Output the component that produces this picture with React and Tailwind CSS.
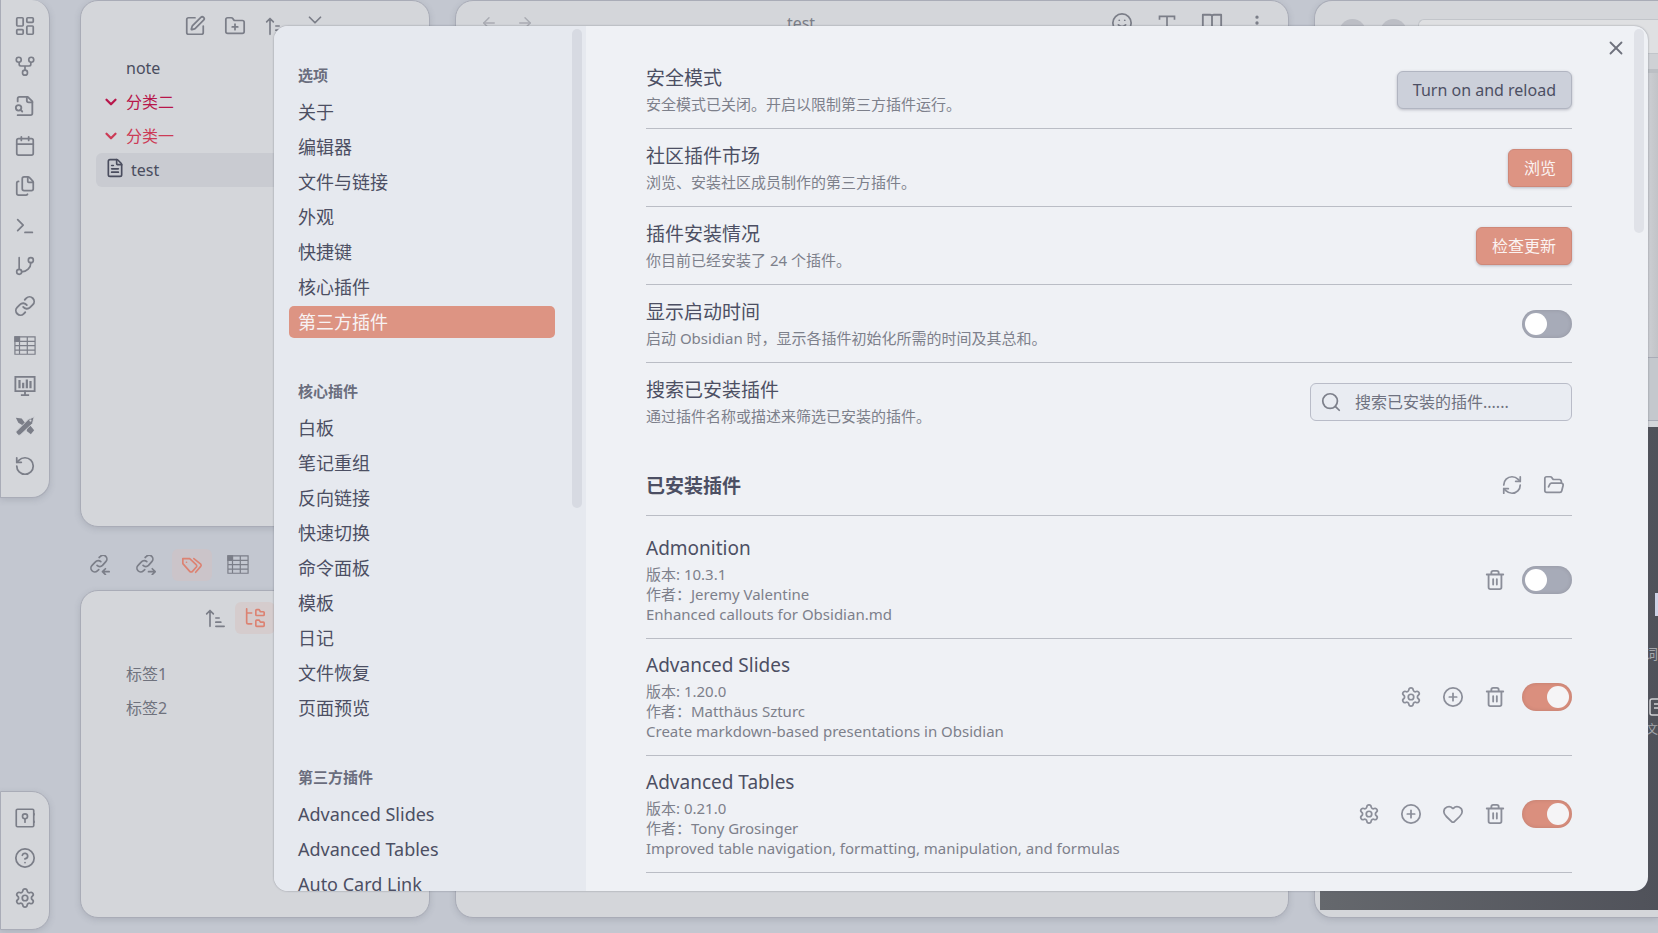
import { ArrowLeft, ArrowRight, Calendar, ChevronDown, CircleHelp, CirclePlus, EllipsisVertical, FileText, Files, FolderOpen, FolderPlus, Heart, LayoutDashboard, RefreshCw, RotateCcw, Search, Settings, Smile, SquarePen, Terminal, X } from 'lucide-react';

const iconProps = { size: 22, strokeWidth: 1.9 };

function Svg({ children, size = 20, ...rest }) {
  return (
    <svg width={size} height={size} viewBox="0 0 24 24" fill="none" stroke="currentColor" strokeWidth="2" strokeLinecap="round" strokeLinejoin="round" aria-hidden="true" {...rest}>
      {children}
    </svg>
  );
}

const FileSearchIcon = () => (
  <Svg size={22}>
    <path d="M4 22h14a2 2 0 0 0 2-2V7l-5-5H6a2 2 0 0 0-2 2v3" />
    <path d="M14 2v4a2 2 0 0 0 2 2h4" />
    <circle cx="5" cy="14" r="3" />
    <path d="m9 18-1.5-1.5" />
  </Svg>
);
const BranchIcon = () => (
  <Svg>
    <path d="M5 2v13" />
    <circle cx="19" cy="5" r="3" />
    <circle cx="5" cy="19" r="3" />
    <path d="M19 8a11 11 0 0 1-11 11" />
  </Svg>
);
const ForkIcon = () => (
  <Svg>
    <circle cx="12" cy="20" r="3" />
    <circle cx="4.500" cy="4.500" r="3" />
    <circle cx="19.500" cy="4.500" r="3" />
    <path d="M5 8v2a2 2 0 0 0 2 2h10a2 2 0 0 0 2-2V8M12 12v5" />
  </Svg>
);
const ChainIcon = () => (
  <Svg size={22}>
    <path d="M10 13a5 5 0 0 0 7.540.540l3-3a5 5 0 0 0-7.070-7.070l-1.720 1.710" />
    <path d="M14 11a5 5 0 0 0-7.540-.540l-3 3a5 5 0 0 0 7.070 7.070l1.710-1.710" />
  </Svg>
);
const TableIcon = () => (
  <Svg size={22} strokeWidth="1.3" strokeLinecap="butt" strokeLinejoin="miter">
    <path d="M1 2h22v19H1zM1 7h22M1 11.500h22M1 16.500h22M6 2v19M14.500 2v19" />
    <path d="M1 2h5v5H1z" fill="currentColor" />
  </Svg>
);
const MonitorIcon = () => (
  <Svg size={22} strokeLinecap="butt" strokeLinejoin="miter">
    <path d="M1.500 2h21v15.500h-21z" />
    <path d="M6 5.500v9M10 8.500v6M14 5v9.500M18 6.500v8" strokeWidth="2.400" />
    <path d="M12 17v5M7.500 22h9" />
  </Svg>
);
const CraftIcon = () => (
  <Svg stroke="none" fill="currentColor">
    <path d="M1 2l7 1 4 5-3 3-5-3zM15 14l3-3 5 6-4 5-5-4z" />
    <path d="M1 19 16 4l7-3-2 8L6 23H4z" stroke="#d4d6da" strokeWidth="1" />
    <circle cx="18.500" cy="5.500" r="1.300" fill="#d4d6da" />
  </Svg>
);
const VaultIcon = () => (
  <Svg>
    <rect x="1.500" y="1.500" width="21" height="21" rx="1.500" />
    <circle cx="12" cy="10" r="3" />
    <path d="M12 13v4M24 7v1M24 16v1" />
  </Svg>
);
const LinkArrowIcon = ({ out }) => (
  <Svg>
    <path d="M8.500 12.500a4.500 4.500 0 0 0 6.500 0l4-4.500a4.500 4.500 0 0 0-6.500-6.300L11 3" />
    <path d="M13 8a4.500 4.500 0 0 0-6.500.3l-4 4.200a4.500 4.500 0 0 0 6.300 6.500l1.700-1.500" />
    {out ? <path d="M15 20h8m-3.500-3.500L23 20l-3.500 3.500" /> : <path d="M23 20h-8m3.500-3.500L15 20l3.500 3.500" />}
  </Svg>
);
const TagsIcon = () => (
  <Svg size={22} strokeWidth="1.800">
    <path d="M2 5v5.500l7.500 8.500a2 2 0 0 0 3 0l4-4.500a2 2 0 0 0 0-3L9.500 5z" />
    <path d="m14 5 7.500 6a2 2 0 0 1 0 2.500L16 20" />
    <path d="M6 9h.01" />
  </Svg>
);
const TreeIcon = () => (
  <Svg>
    <path d="M2 1v16a2 2 0 0 0 2 2h4M2 6h6" />
    <path d="M13 3v5a1 1 0 0 0 1 1h8a1 1 0 0 0 1-1V5.500a1 1 0 0 0-1-1h-3.500L17 2h-3a1 1 0 0 0-1 1zM13 15.500v5.500a1 1 0 0 0 1 1h8a1 1 0 0 0 1-1v-3a1 1 0 0 0-1-1h-3.500L17 14.500h-3a1 1 0 0 0-1 1z" />
  </Svg>
);
const SortIcon = () => (
  <Svg>
    <path d="m2 7 4-4 4 4M6 3v19M13 12h4M13 17h6M13 22h10" />
  </Svg>
);
const TrashIcon = () => (
  <Svg size={22}>
    <path d="M3 6h18M5 6v14a2 2 0 0 0 2 2h10a2 2 0 0 0 2-2V6M8 6V4a2 2 0 0 1 2-2h4a2 2 0 0 1 2 2v2M10 11v6M14 11v6" />
  </Svg>
);
const SerifTIcon = () => (
  <Svg strokeLinecap="butt" strokeLinejoin="miter">
    <path d="M3 8V4h18v4M12 4v16M9 20h6" />
  </Svg>
);
const BookIcon = () => (
  <Svg size={22}>
    <path d="M2 3h8a2 2 0 0 1 2 2 2 2 0 0 1 2-2h8v17h-8a2 2 0 0 0-2 2 2 2 0 0 0-2-2H2zM12 5v17" />
  </Svg>
);

const ribbon = [
  ['仪表盘', <LayoutDashboard {...iconProps} />],
  ['关系图谱', <ForkIcon />],
  ['搜索文件', <FileSearchIcon />],
  ['日历', <Calendar {...iconProps} />],
  ['文件', <Files {...iconProps} />],
  ['终端', <Terminal {...iconProps} />],
  ['分支', <BranchIcon />],
  ['链接', <ChainIcon />],
  ['表格', <TableIcon />],
  ['演示', <MonitorIcon />],
  ['设计', <CraftIcon />],
  ['撤销', <RotateCcw {...iconProps} />],
];
const ribbonBottom = [
  ['仓库', <VaultIcon />],
  ['帮助', <CircleHelp {...iconProps} />],
  ['设置', <Settings {...iconProps} />],
];

const groups = [
  ['选项', ['关于', '编辑器', '文件与链接', '外观', '快捷键', '核心插件', '第三方插件']],
  ['核心插件', ['白板', '笔记重组', '反向链接', '快速切换', '命令面板', '模板', '日记', '文件恢复', '页面预览']],
  ['第三方插件', ['Advanced Slides', 'Advanced Tables', 'Auto Card Link']],
];

const plugins = [
  { name: 'Admonition', version: '10.3.1', author: 'Jeremy Valentine', desc: 'Enhanced callouts for Obsidian.md', on: false, actions: [] },
  { name: 'Advanced Slides', version: '1.20.0', author: 'Matthäus Szturc', desc: 'Create markdown-based presentations in Obsidian', on: true, actions: ['设置', '快捷键'] },
  { name: 'Advanced Tables', version: '0.21.0', author: 'Tony Grosinger', desc: 'Improved table navigation, formatting, manipulation, and formulas', on: true, actions: ['设置', '快捷键', '赞助'] },
];

const actionIcons = {
  设置: <Settings {...iconProps} />,
  快捷键: <CirclePlus {...iconProps} />,
  赞助: <Heart {...iconProps} />,
};

function IconButton({ label, className = 'size-10', children }) {
  return (
    <button type="button" aria-label={label} className={`flex shrink-0 items-center justify-center ${className}`}>
      {children}
    </button>
  );
}

function Toggle({ label, on = false }) {
  return (
    <input
      type="checkbox"
      role="switch"
      aria-label={label}
      defaultChecked={on}
      className="flex h-7 w-[50px] shrink-0 appearance-none items-center rounded-full bg-[#a7abb8] px-[3px] shadow-[inset_0_0_4px_rgba(0,0,0,0.12)] before:size-[22px] before:rounded-full before:bg-white before:content-[''] checked:justify-end checked:bg-[#da8f7e] checked:before:bg-[#f5f4f6]"
    />
  );
}

function Setting({ title, desc, last, children }) {
  return (
    <div className={`flex items-center justify-between border-b ${last ? 'border-transparent' : 'border-[#babdc5]'}`}>
      <div className="pt-[15px] pb-[14px]">
        <h3 className="text-[19px] leading-6">{title}</h3>
        <p className="mt-1 text-[15px] leading-5 text-[#7d808b]">{desc}</p>
      </div>
      {children}
    </div>
  );
}

function Plugin({ name, version, author, desc, on, actions }) {
  return (
    <li className="flex items-center justify-between border-b border-[#babdc5] first:pt-[6px]">
      <div className="py-[14px]">
        <h3 className="text-[19px] leading-6">{name}</h3>
        <div className="mt-1 text-[15px] leading-5 text-[#7d808b]">
          <p>版本: {version}</p>
          <p>作者：{author}</p>
          <p>{desc}</p>
        </div>
      </div>
      <div className="flex items-center gap-[6px] text-[#8b8e99]">
        {actions.map((a) => <IconButton key={a} label={a} className="size-9">{actionIcons[a]}</IconButton>)}
        <IconButton label="卸载" className="mr-[3px] size-9"><TrashIcon /></IconButton>
        <Toggle label={name} on={on} />
      </div>
    </li>
  );
}

const buttonBase = 'h-[38px] rounded-[6px] border px-[15px] text-base shadow-[0_1px_3px_rgba(60,60,80,0.3)]';
const panel = 'border border-[#a9acb7] bg-[#d4d6da] shadow-[0_2px_6px_rgba(80,85,100,0.18)]';

function Workspace() {
  return (
    <div className="flex h-screen text-[#7b7e88]">
      <aside className="flex w-[50px] shrink-0 flex-col justify-between pb-[3px]">
        <nav aria-label="功能区" className={`flex flex-col items-center rounded-r-[18px] border-t-0 pt-[6px] pb-[11px] ${panel}`}>
          {ribbon.map(([label, icon]) => <IconButton key={label} label={label}>{icon}</IconButton>)}
        </nav>
        <nav aria-label="系统" className={`flex flex-col items-center rounded-r-[18px] pt-[6px] pb-[11px] ${panel}`}>
          {ribbonBottom.map(([label, icon]) => <IconButton key={label} label={label}>{icon}</IconButton>)}
        </nav>
      </aside>

      <div className="ml-[30px] flex w-[350px] shrink-0 flex-col pb-[15px]">
        <section className={`h-[527px] rounded-[18px] ${panel}`}>
          <div className="flex h-[50px] items-center pl-[94px]">
            <IconButton label="新建笔记"><SquarePen {...iconProps} /></IconButton>
            <IconButton label="新建文件夹"><FolderPlus {...iconProps} /></IconButton>
            <IconButton label="排序"><SortIcon /></IconButton>
            <IconButton label="展开" className="size-10 pb-3"><ChevronDown {...iconProps} /></IconButton>
          </div>
          <ul className="px-[15px] text-base leading-[34px]">
            <li className="pl-[30px] text-[#4a4d5e]">note</li>
            <li className="flex items-center gap-[6px] pl-[6px] text-[#b8174b]"><ChevronDown size={18} strokeWidth={3} />分类二</li>
            <li className="flex items-center gap-[6px] pl-[6px] text-[#cc3b56]"><ChevronDown size={18} strokeWidth={3} />分类一</li>
            <li className="flex items-center gap-[6px] rounded-[6px] bg-[#c9cbd1] pl-[9px] text-[#4a4d5e]"><FileText size={20} strokeWidth={2} className="mb-1" />test</li>
          </ul>
        </section>
        <div className="flex h-[63px] shrink-0 items-center gap-[6px] pt-3">
          <IconButton label="反向链接" className="h-8 w-10"><LinkArrowIcon /></IconButton>
          <IconButton label="出链" className="h-8 w-10"><LinkArrowIcon out /></IconButton>
          <IconButton label="标签" className="h-8 w-10 rounded-[6px] bg-[#cbc4c9] text-[#dc8272]"><TagsIcon /></IconButton>
          <IconButton label="表格" className="h-8 w-10"><TableIcon /></IconButton>
        </div>
        <section className={`flex-1 rounded-[18px] ${panel}`}>
          <div className="flex h-[54px] items-center pl-[114px]">
            <IconButton label="排序"><SortIcon /></IconButton>
            <IconButton label="嵌套标签" className="h-8 w-10 rounded-[6px] bg-[#d5cccd] text-[#dc8272]"><TreeIcon /></IconButton>
          </div>
          <ul className="pt-[12px] pl-[45px] text-base leading-[34px] text-[#6f727d]">
            <li>标签1</li>
            <li>标签2</li>
          </ul>
        </section>
      </div>

      <section className={`mb-[15px] ml-[25px] w-[834px] shrink rounded-[18px] ${panel}`}>
        <header className="flex h-11 items-center justify-between pr-[11px] pl-[15px]">
          <div className="flex w-[180px] text-[#a9abb2]">
            <IconButton label="后退" className="h-10 w-9"><ArrowLeft {...iconProps} size={18} /></IconButton>
            <IconButton label="前进" className="h-10 w-9"><ArrowRight {...iconProps} size={18} /></IconButton>
          </div>
          <span className="text-base">test</span>
          <div className="flex w-[326px] justify-end gap-[5px]">
            <IconButton label="表情"><Smile {...iconProps} /></IconButton>
            <IconButton label="字体"><SerifTIcon /></IconButton>
            <IconButton label="阅读"><BookIcon /></IconButton>
            <IconButton label="更多"><EllipsisVertical size={20} strokeWidth={2} /></IconButton>
          </div>
        </header>
      </section>

      <section className={`mb-[15px] ml-[25px] flex min-w-0 flex-1 flex-col rounded-l-[18px] border-r-0 ${panel}`}>
        <header className="flex h-[53px] shrink-0 items-end gap-[14px] overflow-hidden pl-6">
          <span className="mb-2 size-[27px] shrink-0 rounded-full bg-[#bcbec5]" />
          <span className="mb-2 size-[27px] shrink-0 rounded-full bg-[#bcbec5]" />
          <span className="-ml-[3px] h-[35px] flex-1 rounded-tl-[6px] border border-r-0 border-[#c2c5ca] bg-[#dfe0e2]" />
        </header>
        <div className="h-[15px] shrink-0 bg-[#cfd1d5]" />
        <div className="h-[288px] shrink-0 border-t-4 border-[#bcbfc4] bg-linear-to-r from-[#d4d6da] from-95% to-[#c2c4c8]" />
        <div className="h-[64px] shrink-0 border-y border-[#a9acb7] bg-[#c4c8cd]" />
        <div className="mt-[6px] mb-[7px] ml-[5px] flex flex-1 flex-col items-end overflow-hidden bg-linear-to-r from-[#65686d] to-[#50525a] pt-[166px] text-[#a4a6ab]">
          <span className="h-[23px] w-[3px] bg-[#cfd2e6]" />
          <span className="mt-7 text-sm leading-5">词</span>
          <svg width="14" height="18" viewBox="0 0 14 18" fill="none" stroke="#d0d1d4" strokeWidth="1.5" className="-mr-1 mt-[34px]" aria-hidden="true">
            <path d="M14 1H4a2 2 0 0 0-2 2v12a2 2 0 0 0 2 2h10M6 6h8M6 10h8" />
          </svg>
          <span className="mt-[6px] text-xs leading-4">文</span>
        </div>
      </section>
    </div>
  );
}

function SettingsDialog() {
  return (
    <div className="absolute inset-0 flex pt-[26px] pr-[10px] pb-[42px] pl-[274px]">
      <div role="dialog" aria-label="设置" className="relative flex min-w-0 flex-1 overflow-hidden rounded-[14px] bg-[#eff1f5] text-[#4c4f63] shadow-[0_0_2px_rgba(80,85,100,0.6)]">
        <nav className="flex w-[312px] shrink-0 justify-between bg-[#e6e9ef] pt-[39px] pr-1 pl-[15px]">
          <div className="flex w-[266px] flex-col gap-[43px]">
            {groups.map(([title, items]) => (
              <section key={title}>
                <h2 className="mb-[11px] pl-[9px] text-[15px] leading-5 font-bold text-[#6a6d7d]">{title}</h2>
                <ul className="flex flex-col gap-[3px]">
                  {items.map((item) => (
                    <li key={item}>
                      <button
                        type="button"
                        className={`h-8 w-full rounded-[5px] pl-[9px] text-left text-[18px] leading-8 whitespace-nowrap ${title === '选项' && item === '第三方插件' ? 'bg-[#dd9483] text-[#f7f2f3]' : ''}`}
                      >
                        {item}
                      </button>
                    </li>
                  ))}
                </ul>
              </section>
            ))}
          </div>
          <div className="-mt-9 h-[479px] w-[10px] rounded-full bg-[#d7dae2]" />
        </nav>
        <main className="min-w-0 flex-1 pt-[25px] pr-[76px] pl-[60px]">
          <Setting title="安全模式" desc="安全模式已关闭。开启以限制第三方插件运行。">
            <button type="button" className={`border-[#b1b5c1] bg-[#ccd0da] ${buttonBase}`}>Turn on and reload</button>
          </Setting>
          <Setting title="社区插件市场" desc="浏览、安装社区成员制作的第三方插件。">
            <button type="button" className={`border-[#cf8878] bg-[#dd9483] text-[#fbf3f2] ${buttonBase}`}>浏览</button>
          </Setting>
          <Setting title="插件安装情况" desc="你目前已经安装了 24 个插件。">
            <button type="button" className={`border-[#cf8878] bg-[#dd9483] text-[#fbf3f2] ${buttonBase}`}>检查更新</button>
          </Setting>
          <Setting title="显示启动时间" desc="启动 Obsidian 时，显示各插件初始化所需的时间及其总和。">
            <Toggle label="显示启动时间" />
          </Setting>
          <Setting title="搜索已安装插件" desc="通过插件名称或描述来筛选已安装的插件。" last>
            <label className="flex h-[38px] w-[262px] items-center gap-[13px] rounded-[6px] border border-[#b9bcc8] bg-[#e9ecf2] pl-[9px] text-[#7d808b]">
              <Search size={22} strokeWidth={1.9} className="shrink-0" />
              <input type="search" aria-label="搜索已安装插件" placeholder="搜索已安装的插件......" className="min-w-0 flex-1 bg-transparent text-base outline-none placeholder:text-[#6f7280]" />
            </label>
          </Setting>
          <div className="flex items-end justify-between border-b border-[#babdc5] pt-[26px] pb-3">
            <h2 className="pb-[5px] text-[19px] leading-6 font-bold">已安装插件</h2>
            <div className="flex gap-[6px] text-[#8b8e99]">
              <IconButton label="重新加载" className="size-9"><RefreshCw {...iconProps} /></IconButton>
              <IconButton label="打开文件夹" className="size-9"><FolderOpen {...iconProps} /></IconButton>
            </div>
          </div>
          <ul>
            {plugins.map((p) => <Plugin key={p.name} {...p} />)}
          </ul>
        </main>
        <button type="button" aria-label="关闭" className="absolute top-[10px] right-[20px] flex size-6 items-center justify-center text-[#6f727d]"><X size={22} strokeWidth={2} /></button>
        <div className="absolute top-[3px] right-1 h-[204px] w-[10px] rounded-full bg-[#e0e2e8]" />
      </div>
    </div>
  );
}

export default function App() {
  return (
    <div className="relative h-screen overflow-hidden bg-[#c3c7d0] font-['Noto_Sans','Noto_Sans_CJK_SC',sans-serif]">
      <Workspace />
      <SettingsDialog />
    </div>
  );
}
